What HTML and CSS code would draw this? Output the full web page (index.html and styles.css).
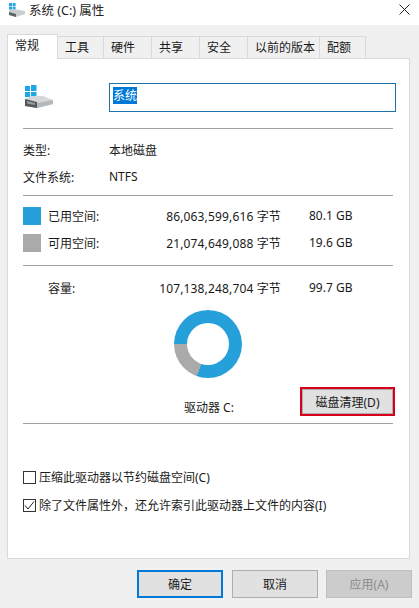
FILE: index.html
```html
<!DOCTYPE html>
<html lang="zh-CN">
<head>
    <meta charset="UTF-8">
    <meta name="viewport" content="width=device-width, initial-scale=1.0">
    <title>系统 (C:) 属性</title>
    <link rel="stylesheet" href="styles.css">
</head>
<body>
    <header class="titlebar">
        <svg class="title-icon" width="18" height="14" viewBox="0 0 18 14">
            <rect x="1" y="0" width="3" height="3" fill="#2aa5e0"/>
            <rect x="4.6" y="0" width="3" height="3" fill="#2aa5e0"/>
            <rect x="1" y="3.6" width="3" height="3" fill="#2aa5e0"/>
            <rect x="4.6" y="3.6" width="3" height="3" fill="#2aa5e0"/>
            <path d="M1 7.5 L5 6 L17 8 L17 11 L8 14 L1 12 Z" fill="#c9cdd0"/>
            <path d="M1 9 L8 11 L8 14 L1 12 Z" fill="#5f6468"/>
        </svg>
        <span class="title-text">系统 (C:) 属性</span>
        <svg class="close" width="11" height="11" viewBox="0 0 11 11">
            <path d="M0.5 0.5 L10.5 10.5 M10.5 0.5 L0.5 10.5" stroke="#222" stroke-width="1" fill="none"/>
        </svg>
    </header>

    <nav class="tabs">
        <a class="tab active w-general">常规</a>
        <a class="tab w-tools">工具</a>
        <a class="tab w-std">硬件</a>
        <a class="tab w-std">共享</a>
        <a class="tab w-std">安全</a>
        <a class="tab w-prev">以前的版本</a>
        <a class="tab w-tools">配额</a>
    </nav>

    <main class="panel">
        <div class="head">
            <svg class="drive-icon" width="32" height="26" viewBox="0 0 32 26">
                <rect x="2" y="1" width="5" height="5" fill="#1fa6e8"/>
                <rect x="8" y="0" width="5.5" height="6" fill="#1fa6e8"/>
                <rect x="2" y="7" width="5" height="5" fill="#1fa6e8"/>
                <rect x="8" y="7" width="5.5" height="5.5" fill="#1fa6e8"/>
                <path d="M2 14 L8 11 L20 11 L30 15 L30 19 L14 23 L2 21 Z" fill="#d5d8da"/>
                <path d="M14 18 L30 15 L30 19 L14 23 Z" fill="#b4b8bb"/>
                <path d="M2 14 L14 17 L14 23 L2 21 Z" fill="#55595c"/>
                <path d="M4 16 L12 18 L12 20 L4 18.5 Z" fill="#9a9ea1"/>
            </svg>
            <div class="name-box"><span class="name-sel">系统</span></div>
        </div>

        <hr>

        <div class="info-row"><span class="info-label">类型:</span><span>本地磁盘</span></div>
        <div class="info-row"><span class="info-label">文件系统:</span><span>NTFS</span></div>

        <hr class="sep-info">

        <div class="space-row">
            <span class="swatch used"></span>
            <span>已用空间:</span>
            <span class="bytes">86,063,599,616 字节</span>
            <span class="gb">80.1 GB</span>
        </div>
        <div class="space-row">
            <span class="swatch free"></span>
            <span>可用空间:</span>
            <span class="bytes">21,074,649,088 字节</span>
            <span class="gb">19.6 GB</span>
        </div>

        <hr class="sep-space">

        <div class="space-row capacity">
            <span></span>
            <span>容量:</span>
            <span class="bytes">107,138,248,704 字节</span>
            <span class="gb">99.7 GB</span>
        </div>

        <div class="donut"></div>

        <div class="drive-row">
            <span class="drive-label">驱动器 C:</span>
            <button class="btn cleanup">磁盘清理(D)</button>
        </div>

        <hr class="sep-drive">

        <label class="check first"><span class="box"></span>压缩此驱动器以节约磁盘空间(C)</label>
        <label class="check">
            <span class="box">
                <svg width="11" height="11" viewBox="0 0 11 11"><path d="M1 5.5 L4 9 L10 1.5" stroke="#222" stroke-width="1" fill="none"/></svg>
            </span>除了文件属性外，还允许索引此驱动器上文件的内容(I)
        </label>
    </main>

    <footer class="footer">
        <button class="btn primary">确定</button>
        <button class="btn">取消</button>
        <button class="btn disabled">应用(A)</button>
    </footer>
</body>
</html>
```

FILE: styles.css
```css
html{
    box-sizing: border-box;
    font-size: 12px;
    font-family: "Noto Sans", "Noto Sans CJK SC", sans-serif;
}

*,
*::after,
*::before{
    box-sizing: border-box;
}

body{
    margin: 0;
    height: 608px;
    overflow: hidden;
    background-color: #f0f0f0;
    color: #1a1a1a;
}

hr{
    border: 0;
    height: 1px;
    margin: 16px 0 0;
    background-color: #a0a0a0;
}

.titlebar{
    display: flex;
    align-items: center;
    height: 25px;
    padding: 0 9px 6px 8px;
    background-color: #fff;
}
.title-icon{
    margin-right: 3px;
}
.title-text{
    flex: 1;
    font-size: 12.5px;
    color: #222;
}

.tabs{
    display: flex;
    align-items: flex-end;
    height: 33px;
    padding-left: 7px;
}
.tab{
    height: 22px;
    padding-left: 7px;
    line-height: 22px;
    border: 1px solid #d9d9d9;
    border-bottom: 0;
    border-left-width: 0;
    background-color: #f0f0f0;
}
.tab.active{
    height: 25px;
    line-height: 22px;
    margin-bottom: -1px;
    border-left-width: 1px;
    background-color: #fff;
    position: relative;
}
.w-general{ width: 51px; }
.w-tools{ width: 46px; }
.w-std{ width: 48px; }
.w-prev{ width: 72px; }

.panel{
    width: 403px;
    height: 501px;
    margin-left: 7px;
    padding: 24px 16px 0 15px;
    border: 1px solid #d9d9d9;
    background-color: #fff;
}

.head{
    display: flex;
    align-items: center;
    height: 29px;
    margin-right: -3px;
}
.drive-icon{
    width: 32px;
    margin-right: 54px;
}
.name-box{
    flex: 1;
    height: 29px;
    padding: 3px;
    border: 1px solid #1c72a8;
}
.name-sel{
    display: inline-block;
    height: 17px;
    line-height: 17px;
    background-color: #0078d7;
    color: #fff;
    font-size: 12px;
}

.info-row{
    display: flex;
    align-items: center;
    height: 27px;
}
.head + hr + .info-row{
    margin-top: 7px;
}
.info-label{
    width: 86px;
}
.sep-info{
    margin-top: 5px;
}

.space-row{
    display: grid;
    grid-template-columns: 25px 70px 163px 84px;
    align-items: center;
    height: 27px;
}
.sep-info + .space-row{
    margin-top: 6px;
}
.swatch{
    width: 18px;
    height: 18px;
}
.swatch.used{
    background-color: #26a0da;
}
.swatch.free{
    background-color: #aaa;
}
.bytes{
    text-align: right;
    white-space: nowrap;
    letter-spacing: .15px;
}
.gb{
    padding-left: 28px;
    white-space: nowrap;
}
.sep-space{
    margin-top: 9px;
}
.capacity{
    margin-top: 8px;
}

.donut{
    position: relative;
    width: 68px;
    height: 68px;
    margin: 9px 0 0 151px;
    border-radius: 50%;
    background: conic-gradient(from 199deg, #aaa 71deg, #26a0da 0);
}
.donut::after{
    content: "";
    position: absolute;
    inset: 13px;
    border-radius: 50%;
    background-color: #fff;
}

.drive-row{
    display: flex;
    align-items: flex-end;
    height: 31px;
    margin: 9px -2px 0 0;
    padding-left: 161px;
}
.drive-label{
    flex: none;
    width: 116px;
    line-height: 20px;
}

.btn{
    flex: none;
    width: 86px;
    height: 28px;
    padding: 0;
    font: inherit;
    color: #1a1a1a;
    border: 1px solid #adadad;
    background-color: #e1e1e1;
}
.cleanup{
    width: 95px;
    height: 29px;
    margin-bottom: 2px;
    border: 2px solid #d9001b;
    box-shadow: inset 0 0 0 1px #adadad;
}
.sep-drive{
    margin-top: 5px;
}

.check{
    display: flex;
    align-items: center;
    height: 20px;
}
.check.first{
    margin-top: 43px;
    margin-bottom: 8px;
}
.box{
    display: flex;
    align-items: center;
    justify-content: center;
    width: 13px;
    height: 13px;
    margin-right: 3px;
    border: 1px solid #333;
    background-color: #fff;
}

.footer{
    display: flex;
    justify-content: flex-end;
    gap: 8px;
    padding: 11px 7px 0 0;
}
.primary{
    margin-right: 1px;
    border: 2px solid #0078d7;
}
.disabled{
    color: #8a8a8a;
    background-color: #cccccc;
    border-color: #bfbfbf;
}
```
